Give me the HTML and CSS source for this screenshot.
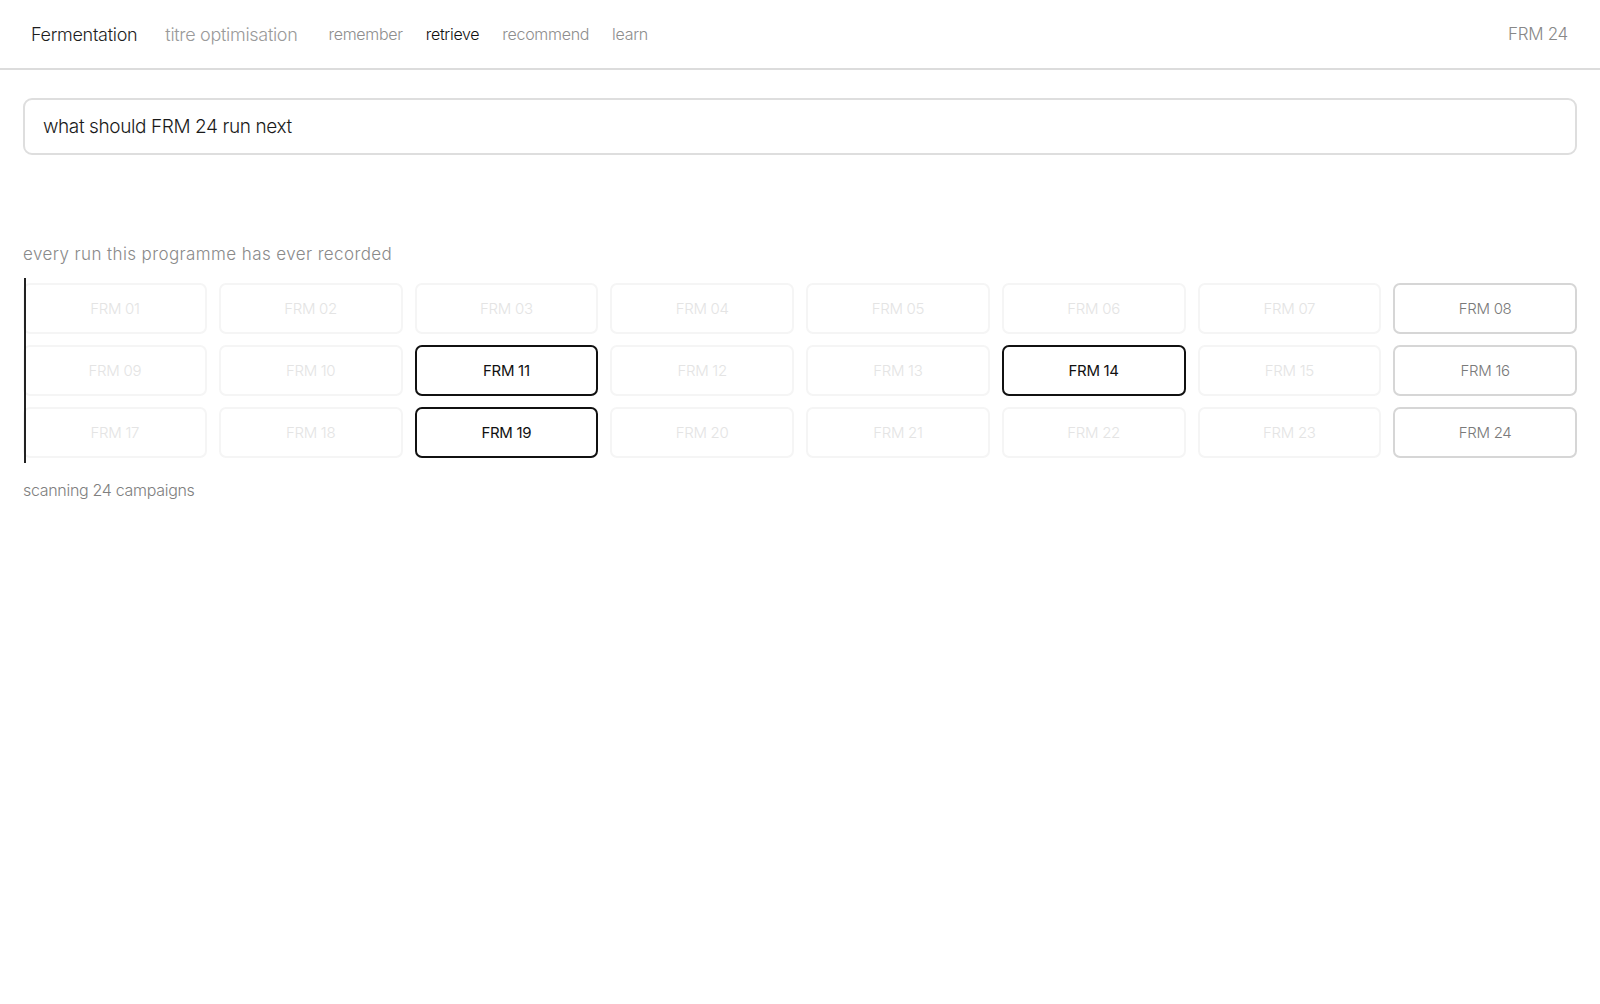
FILE: index.html
```html
<!DOCTYPE html>
<html>
<head>
  <meta charset="utf-8">
  <title>Fermentation · retrieve</title>
  <link rel="stylesheet" href="styles.css">
</head>
<body>
  <header class="topbar">
    <nav class="crumbs">
      <span class="programme">Fermentation</span>
      <span class="project">titre optimisation</span>
      <span class="step">remember</span>
      <span class="step active">retrieve</span>
      <span class="step">recommend</span>
      <span class="step">learn</span>
    </nav>
    <span class="current">FRM 24</span>
  </header>

  <main class="page">
    <div class="query">what should FRM 24 run next</div>

    <p class="caption">every run this programme has ever recorded</p>

    <div class="scan">
      <div class="cursor"></div>
      <div class="runs">
        <div class="run">FRM 01</div>
        <div class="run">FRM 02</div>
        <div class="run">FRM 03</div>
        <div class="run">FRM 04</div>
        <div class="run">FRM 05</div>
        <div class="run">FRM 06</div>
        <div class="run">FRM 07</div>
        <div class="run seen">FRM 08</div>
        <div class="run">FRM 09</div>
        <div class="run">FRM 10</div>
        <div class="run hit">FRM 11</div>
        <div class="run">FRM 12</div>
        <div class="run">FRM 13</div>
        <div class="run hit">FRM 14</div>
        <div class="run">FRM 15</div>
        <div class="run seen">FRM 16</div>
        <div class="run">FRM 17</div>
        <div class="run">FRM 18</div>
        <div class="run hit">FRM 19</div>
        <div class="run">FRM 20</div>
        <div class="run">FRM 21</div>
        <div class="run">FRM 22</div>
        <div class="run">FRM 23</div>
        <div class="run seen">FRM 24</div>
      </div>
    </div>

    <p class="status">scanning 24 campaigns</p>
  </main>
</body>
</html>
```

FILE: styles.css
```css
body {
  margin: 0;
  background: #fff;
  color: #222;
  font-family: Inter, "Noto Sans", sans-serif;
  font-weight: 300;
}

.topbar {
  height: 68px;
  border-bottom: 2px solid #dcdcdc;
  display: flex;
  align-items: center;
  justify-content: space-between;
  padding: 0 32px 0 31px;
  letter-spacing: -0.3px;
}
.crumbs { display: flex; align-items: center; }
.programme { font-size: 18px; color: #1e1e1e; margin-right: 28px; }
.project { font-size: 18px; color: #9a9a9a; margin-right: 31px; }
.step { font-size: 16px; color: #8e8e8e; margin-right: 23px; }
.step.active { color: #111; }
.current { font-size: 17px; color: #888; }

.page { padding: 28px 23px; }

.query {
  height: 53px;
  border: 2px solid #dedede;
  border-radius: 9px;
  display: flex;
  align-items: center;
  padding: 0 18px;
  font-size: 19px;
  color: #1a1a1a;
  letter-spacing: -0.4px;
}

.caption {
  margin: 89px 0 0;
  font-size: 17px;
  color: #8a8a8a;
  letter-spacing: 0.4px;
}

.scan { position: relative; margin-top: 14px; padding: 5px 0 5px; }
.cursor {
  position: absolute;
  left: 1px; top: 0; bottom: 0;
  width: 2px;
  background: #222;
}
.runs {
  display: grid;
  grid-template-columns: repeat(8, 1fr);
  gap: 11px 12px;
}
.run {
  height: 47px;
  border: 2px solid #f5f5f5;
  border-radius: 7px;
  display: flex;
  align-items: center;
  justify-content: center;
  font-size: 15px;
  color: #e4e4e4;
  letter-spacing: -0.3px;
}
.run.seen { border-color: #d6d6d6; color: #7a7a7a; }
.run.hit { border-color: #111; color: #111; font-weight: 400; }

.status {
  margin: 17px 0 0;
  font-size: 16px;
  color: #808080;
  letter-spacing: -0.3px;
}
```
